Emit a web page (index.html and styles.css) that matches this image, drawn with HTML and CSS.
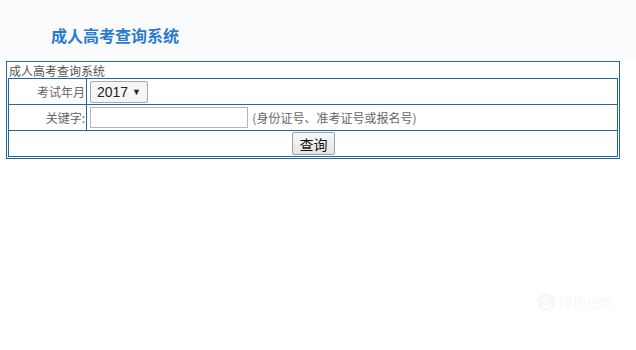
FILE: index.html
```html
<!DOCTYPE html>
<html lang="zh-CN">
<head>
<meta charset="UTF-8">
<title>成人高考查询系统</title>
<link rel="stylesheet" href="styles.css">
</head>
<body>

<div class="header">
    <h1>成人高考查询系统</h1>
</div>

<div class="box">
    <div class="caption">成人高考查询系统</div>
    <table class="form">
        <tr>
            <td class="label">考试年月</td>
            <td>
                <span class="select-wrap">
                    <select class="year">
                        <option>2017</option>
                    </select>
                </span>
            </td>
        </tr>
        <tr>
            <td class="label">关键字:</td>
            <td>
                <input type="text" class="keyword">
                <span class="hint">(身份证号、准考证号或报名号)</span>
            </td>
        </tr>
        <tr>
            <td colspan="2" class="actions">
                <button class="btn">查询</button>
            </td>
        </tr>
    </table>
</div>

<div class="watermark"><span class="wm-logo">S</span>搜狗指南</div>

</body>
</html>
```

FILE: styles.css
```css
body {
    margin: 0;
    font-family: "Liberation Sans", "Noto Sans CJK SC", sans-serif;
    font-size: 12px;
    color: #555;
    background: #fff;
}
.header {
    height: 61px;
    background: linear-gradient(#f9fafc, #fbfcfe);
    overflow: hidden;
}
.header h1 {
    margin: 24px 0 0 51px;
    font-size: 16px;
    line-height: 22px;
    color: #2a7bcf;
    font-family: "Noto Sans CJK SC", sans-serif;
}
.box {
    margin-left: 6px;
    width: 610px;
    border: 1px solid #23689c;
    padding: 0 1px 1px 1px;
    background: #fff;
}
.caption {
    height: 16px;
    line-height: 18px;
    font-family: "Noto Sans CJK SC", sans-serif;
    color: #555;
    padding-left: 1px;
}
.form {
    width: 100%;
    border-collapse: collapse;
    border: 1px solid #23689c;
}
.form tr {
    height: 26px;
}
.form td {
    border: 1px solid #23689c;
    padding: 0 2px 0 3px;
}
.form td.label {
    width: 76px;
    text-align: right;
    color: #666;
    font-family: "Noto Sans CJK SC", sans-serif;
    padding: 0 1px 0 0;
}
.select-wrap {
    position: relative;
    display: inline-block;
    vertical-align: middle;
}
.select-wrap::after {
    content: "▼";
    position: absolute;
    right: 7px;
    top: 6px;
    font-size: 9px;
    color: #222;
    pointer-events: none;
}
.year {
    appearance: none;
    -webkit-appearance: none;
    width: 58px;
    height: 22px;
    border: 1px solid #a9a9a9;
    border-radius: 2px;
    background: #f6f6f6;
    font-family: "Liberation Sans", sans-serif;
    font-size: 14px;
    color: #222;
    padding: 0 0 0 6px;
    margin: 0;
}
.keyword {
    width: 158px;
    height: 21px;
    box-sizing: border-box;
    border: 1px solid #b5b5b5;
    margin: 0;
    vertical-align: middle;
}
.hint {
    color: #666;
    font-family: "Noto Sans CJK SC", sans-serif;
    vertical-align: middle;
    margin-left: 1px;
}
.actions {
    text-align: center;
}
.btn {
    height: 23px;
    width: 43px;
    padding: 0;
    border: 1px solid #a0a0a0;
    border-radius: 2px;
    background: linear-gradient(#f8f8f8, #e4e4e4);
    font-family: "Noto Sans CJK SC", sans-serif;
    font-size: 14px;
    color: #111;
    vertical-align: middle;
}
.watermark {
    position: absolute;
    left: 537px;
    top: 292px;
    font-family: "Noto Sans CJK SC", sans-serif;
    font-size: 14px;
    color: rgba(0, 0, 0, 0.03);
    font-weight: bold;
}
.wm-logo {
    display: inline-block;
    width: 18px;
    height: 18px;
    line-height: 18px;
    text-align: center;
    border-radius: 50%;
    background: rgba(0, 0, 0, 0.03);
    color: #fff;
    margin-right: 3px;
}
```
